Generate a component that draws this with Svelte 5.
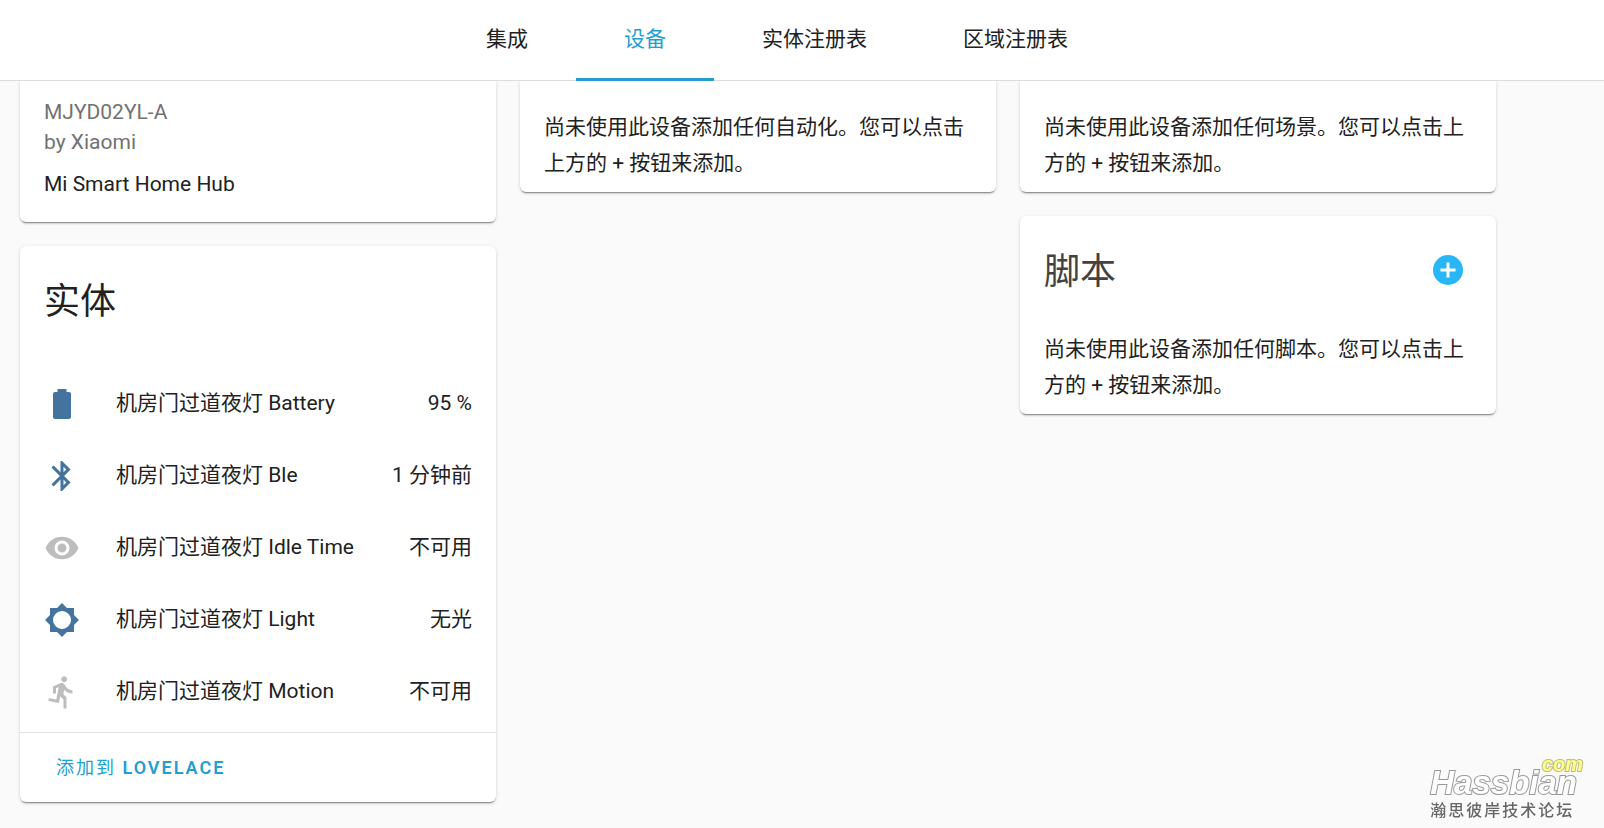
<script>
    const tabs = ['集成', '设备', '实体注册表', '区域注册表'];
    let active = $state(1);

    const icons = {
        battery: 'M16.67,4H15V2H9V4H7.33A1.33,1.33 0 0,0 6,5.33V20.67C6,21.4 6.6,22 7.33,22H16.67A1.33,1.33 0 0,0 18,20.67V5.33C18,4.6 17.4,4 16.67,4Z',
        bluetooth: 'M14.88,16.29L13,18.17V14.41M13,5.83L14.88,7.71L13,9.58M17.71,7.71L12,2H11V9.58L6.41,5L5,6.41L10.59,12L5,17.58L6.41,19L11,14.41V22H12L17.71,16.29L13.41,12L17.71,7.71Z',
        eye: 'M12,9A3,3 0 0,0 9,12A3,3 0 0,0 12,15A3,3 0 0,0 15,12A3,3 0 0,0 12,9M12,17A5,5 0 0,1 7,12A5,5 0 0,1 12,7A5,5 0 0,1 17,12A5,5 0 0,1 12,17M12,4.5C7,4.5 2.73,7.61 1,12C2.73,16.39 7,19.5 12,19.5C17,19.5 21.27,16.39 23,12C21.27,7.61 17,4.5 12,4.5Z',
        brightness: 'M12,18A6,6 0 0,1 6,12A6,6 0 0,1 12,6A6,6 0 0,1 18,12A6,6 0 0,1 12,18M20,15.31L23.31,12L20,8.69V4H15.31L12,0.69L8.69,4H4V8.69L0.69,12L4,15.31V20H8.69L12,23.31L15.31,20H20V15.31Z',
        run: 'M13.49,5.48C14.49,5.48 15.39,4.58 15.39,3.48C15.39,2.38 14.49,1.48 13.49,1.48C12.39,1.48 11.49,2.38 11.49,3.48C11.49,4.58 12.39,5.48 13.49,5.48M9.89,19.38L10.89,14.98L12.99,16.98V22.98H14.99V15.48L12.89,13.48L13.49,10.48C14.79,11.98 16.79,12.98 18.99,12.98V10.98C17.09,10.98 15.49,9.98 14.69,8.58L13.69,6.98C13.29,6.38 12.69,5.98 11.99,5.98C11.69,5.98 11.49,6.08 11.19,6.08L5.99,8.28V12.98H7.99V9.58L9.79,8.88L8.19,16.98L3.29,15.98L2.89,17.98L9.89,19.38Z',
        plus: 'M17,13H13V17H11V13H7V11H11V7H13V11H17M12,2A10,10 0 0,0 2,12A10,10 0 0,0 12,22A10,10 0 0,0 22,12A10,10 0 0,0 12,2Z'
    };

    const entities = [
        { icon: 'battery', name: '机房门过道夜灯 Battery', state: '95 %', available: true },
        { icon: 'bluetooth', name: '机房门过道夜灯 Ble', state: '1 分钟前', available: true },
        { icon: 'eye', name: '机房门过道夜灯 Idle Time', state: '不可用', available: false },
        { icon: 'brightness', name: '机房门过道夜灯 Light', state: '无光', available: true },
        { icon: 'run', name: '机房门过道夜灯 Motion', state: '不可用', available: false }
    ];
</script>

{#snippet icon(name)}
    <svg class="icon" viewBox="0 0 24 24" aria-hidden="true">
        <path d={icons[name]} />
    </svg>
{/snippet}

<header class="toolbar">
    <nav class="tabs">
        {#each tabs as tab, i}
            <button class="tab" class:active={active === i} onclick={() => (active = i)}>{tab}</button>
        {/each}
    </nav>
</header>

<main class="columns">
    <div class="column">
        <section class="card scrolled device">
            <div class="secondary">MJYD02YL-A</div>
            <div class="secondary">by Xiaomi</div>
            <div class="hub">Mi Smart Home Hub</div>
        </section>

        <section class="card">
            <h1>实体</h1>
            <ul class="entities">
                {#each entities as entity}
                    <li class:unavailable={!entity.available}>
                        {@render icon(entity.icon)}
                        <div class="info">
                            <span>{entity.name}</span>
                            <span>{entity.state}</span>
                        </div>
                    </li>
                {/each}
            </ul>
            <div class="actions">
                <button class="text-button">添加到 <b>LOVELACE</b></button>
            </div>
        </section>
    </div>

    <div class="column">
        <section class="card scrolled automation">
            <p>尚未使用此设备添加任何自动化。您可以点击上方的 + 按钮来添加。</p>
        </section>
    </div>

    <div class="column">
        <section class="card scrolled automation">
            <p>尚未使用此设备添加任何场景。您可以点击上方的 + 按钮来添加。</p>
        </section>

        <section class="card">
            <div class="card-header">
                <h1>脚本</h1>
                <button class="add" aria-label="脚本">{@render icon('plus')}</button>
            </div>
            <p>尚未使用此设备添加任何脚本。您可以点击上方的 + 按钮来添加。</p>
        </section>
    </div>
</main>

<div class="watermark">
    <div class="brand">Hassbian<span class="com">com</span></div>
    <div class="forum">瀚思彼岸技术论坛</div>
</div>

<style>
    :global(body) {
        background: #fafafa;
        color: #212121;
        font-family: Roboto, "Noto Sans CJK SC", sans-serif;
        font-size: 21px;
    }

    button {
        border: none;
        background: none;
        padding: 0;
        font-family: inherit;
        cursor: pointer;
    }

    .toolbar {
        position: relative;
        background: #fff;
        border-bottom: 1px solid #dcdcdc;
        padding-right: 50px;
    }

    .tabs {
        display: flex;
        justify-content: center;
        height: 80px;
    }

    .tab {
        position: relative;
        padding: 0 48px 6px;
        font-size: 21px;
        color: #212121;
    }

    .tab.active {
        color: #229fd1;
    }

    .tab.active::after {
        content: "";
        position: absolute;
        left: 0;
        right: 0;
        bottom: -1px;
        height: 3px;
        background: #229fd1;
    }

    .columns {
        display: grid;
        grid-template-columns: repeat(3, minmax(0, 1fr));
        gap: 24px;
        padding: 0 108px 24px 20px;
    }

    .column {
        display: flex;
        flex-direction: column;
        gap: 24px;
    }

    .card {
        background: #fff;
        border-radius: 6px;
        box-shadow: 0 3px 2px -2px rgba(0, 0, 0, 0.3), 0 1px 1px rgba(0, 0, 0, 0.2), 0 1px 4px rgba(0, 0, 0, 0.12);
    }

    /* top row continues underneath the toolbar */
    .scrolled {
        border-top-left-radius: 0;
        border-top-right-radius: 0;
        clip-path: inset(0 -8px -8px -8px);
    }

    .device {
        padding: 16px 24px 23px;
        line-height: 30px;
    }

    .secondary {
        color: #727272;
    }

    .hub {
        margin-top: 12px;
    }

    .automation {
        padding-top: 28px;
    }

    p {
        margin: 0;
        padding: 0 24px 11px;
        line-height: 36px;
    }

    h1 {
        margin: 0;
        padding: 26px 24px 36px;
        font-size: 36px;
        font-weight: 400;
        line-height: 60px;
    }

    .card-header {
        display: flex;
        justify-content: space-between;
        align-items: flex-start;
        color: #424242;
    }

    .card-header h1 {
        padding-bottom: 29px;
    }

    .add {
        display: flex;
        margin: 36px 30px 0 0;
        color: #29b6f6;
    }

    .icon {
        width: 36px;
        height: 36px;
        fill: currentColor;
        flex-shrink: 0;
    }

    .entities {
        list-style: none;
        margin: 0;
        padding: 0 24px 4px;
    }

    .entities li {
        display: flex;
        align-items: center;
        height: 72px;
    }

    .entities .icon {
        color: #44739e;
    }

    .entities .unavailable .icon {
        color: #bdbdbd;
    }

    .info {
        flex: 1;
        display: flex;
        justify-content: space-between;
        align-items: baseline;
        padding: 0 0 6px 36px;
    }

    .actions {
        border-top: 1px solid #e0e0e0;
        padding: 6px 24px 9px;
    }

    .text-button {
        height: 54px;
        padding: 0 12px;
        font-size: 18px;
        letter-spacing: 2px;
        color: #229fd1;
    }

    .text-button b {
        font-weight: 600;
    }

    .watermark {
        position: fixed;
        right: 27px;
        bottom: 7px;
        color: #666;
    }

    .brand {
        position: relative;
        font: italic bold 33px/36px "Liberation Sans", Arial, sans-serif;
        color: #fff;
        -webkit-text-stroke: 2px #999;
        paint-order: stroke fill;
    }

    .com {
        position: absolute;
        right: -6px;
        top: -13px;
        font-size: 20px;
        line-height: 24px;
        color: #ffff80;
        -webkit-text-stroke: 2px #b9b98c;
    }

    .forum {
        font-size: 16px;
        font-weight: 500;
        line-height: 20px;
        letter-spacing: 2px;
    }
</style>
